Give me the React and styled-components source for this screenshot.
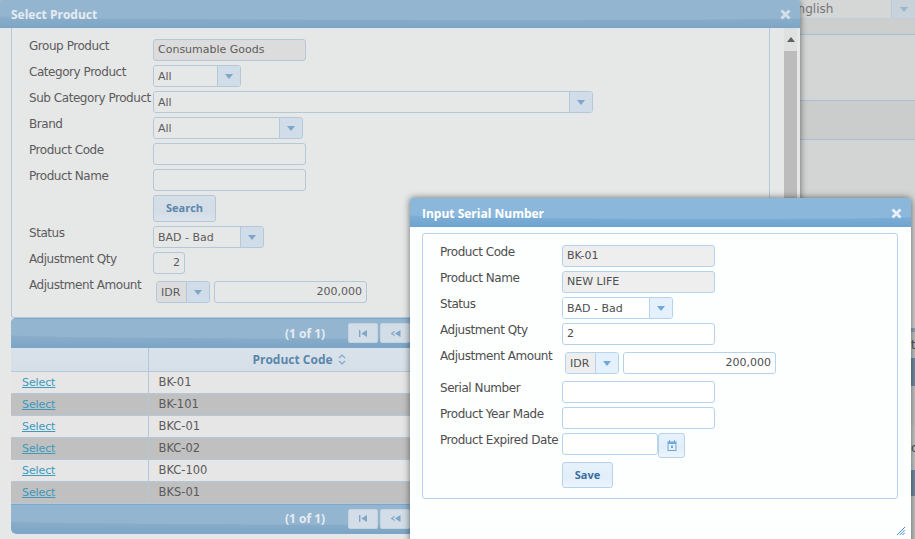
import React from "react";
import styled, { createGlobalStyle, ThemeProvider } from "styled-components";

const dimTheme = {
  body: "#e6e7e7",
  text: "#5c5c5c",
  line: "#b4c8da",
  field: "#e6e7e7",
  readonly: "#dcdcdc",
  arrowCell: "#d0dce8",
  arrow: "#7fa6c9",
  button: "linear-gradient(#d6dfe8 0%, #d3dde7 60%, #dbe3ea 100%)",
  buttonText: "#5b86ab",
  title: "#e4ecf2",
  barTop: "#94b5cf",
  barMid: "#8cafcb",
  barLow: "#7ca5c5",
};

const liveTheme = {
  ...dimTheme,
  body: "#fdfefe",
  text: "#4e4e4e",
  line: "#b5d3ec",
  field: "#ffffff",
  readonly: "#eeeeee",
  arrowCell: "#e4f0fb",
  arrow: "#6ea9d8",
  button: "linear-gradient(#e6f1fb 0%, #e1eefa 60%, #edf5fc 100%)",
  buttonText: "#3a6f9f",
  title: "#ffffff",
  barTop: "#8ab7da",
  barMid: "#7fb0d7",
  barLow: "#6ea4d0",
};

const GlobalStyle = createGlobalStyle`
  html, body {
    margin: 0;
    height: 100%;
    overflow: hidden;
    background: #d4d5d5;
    font-family: "DejaVu Sans", Verdana, sans-serif;
  }
`;

const Page = styled.div`
  position: relative;
  width: 915px;
  height: 539px;
  overflow: hidden;
`;

const Backdrop = styled.div`
  display: flex;
  flex-direction: column;
`;

const BackdropTop = styled.div`
  display: flex;
  justify-content: flex-end;
  height: 19px;
  background: #d5d6d6;
  border-bottom: 1px solid #c2ced8;
  box-sizing: border-box;
`;

const LangSelect = styled.div`
  display: flex;
  align-items: center;
  justify-content: space-between;
  width: 125px;
  height: 18px;
  font-size: 12px;
  color: #73757a;
`;

const LangArrow = styled.span`
  display: flex;
  align-items: center;
  justify-content: center;
  width: 23px;
  height: 18px;
  background: #c8d2db;
  border-left: 1px solid #bccad6;
`;

const BackdropBand = styled.div`
  height: ${(p) => p.$h}px;
  background: ${(p) => p.$bg};
  border-bottom: 1px solid ${(p) => p.$line || "transparent"};
  box-sizing: border-box;
  padding-left: 911px;
  font-size: 12px;
  line-height: ${(p) => p.$h}px;
  color: #50565c;
  overflow: hidden;
`;

const Window = styled.div`
  position: absolute;
  left: ${(p) => p.$x}px;
  top: ${(p) => p.$y}px;
  width: ${(p) => p.$w}px;
  height: ${(p) => p.$h}px;
  display: flex;
  flex-direction: column;
  background: ${(p) => p.theme.body};
  border-radius: 4px 4px 0 0;
  box-shadow: 0 0 7px rgba(0, 0, 0, 0.55);
`;

const BarSurface = styled.div`
  position: relative;
  overflow: hidden;
  background: linear-gradient(${(p) => p.theme.barMid} 55%, ${(p) => p.theme.barLow});
  &::before {
    content: "";
    position: absolute;
    left: 0;
    right: 0;
    top: 0;
    bottom: 8px;
    background: ${(p) => p.theme.barTop};
    border-radius: 0 0 35% 65% / 0 0 2px 4px;
  }
  & > * {
    position: relative;
  }
`;

const TitleBar = styled(BarSurface)`
  display: flex;
  align-items: center;
  justify-content: space-between;
  flex: none;
  height: ${(p) => p.$h}px;
  padding: 1px 9px 0 ${(p) => p.$pad}px;
  box-sizing: border-box;
  border-radius: 4px 4px 0 0;
`;

const Title = styled.span`
  font-family: "Open Sans", sans-serif;
  font-size: 12px;
  font-weight: bold;
  color: ${(p) => p.theme.title};
`;

const CloseIcon = styled.svg`
  width: 11px;
  height: 11px;
  display: block;
`;

const Body = styled.div`
  flex: 1;
  display: flex;
  min-height: 0;
  overflow: hidden;
`;

const ScrollContent = styled.div`
  width: 770px;
  padding-left: 11px;
  box-sizing: border-box;
  flex: none;
`;

const ScrollTrack = styled.div`
  margin-left: 14px;
  width: 13px;
  display: flex;
  flex-direction: column;
  flex: none;
`;

const ScrollUp = styled.div`
  height: 23px;
  background: #dfe0e0;
  display: flex;
  align-items: center;
  justify-content: center;
`;

const ScrollThumb = styled.div`
  flex: 1;
  background: #bcbcbc;
`;

const Panel = styled.div`
  box-sizing: border-box;
  border: 1px solid ${(p) => p.theme.line};
  border-radius: 0 0 3px 3px;
  padding: 11px 0 ${(p) => (p.$open ? 14 : 10)}px 17px;
  ${(p) => p.$open && "border-top: none;"}
  ${(p) => !p.$open && "border-radius: 3px; margin: 6px 13px 0 12px;"}
`;

const Row = styled.div`
  display: flex;
  align-items: flex-start;
  margin-bottom: ${(p) => (p.$amount ? 7 : 4)}px;
  ${(p) => p.$amount && "padding-top: 3px;"}
  &:last-child {
    margin-bottom: 0;
  }
`;

const Label = styled.label`
  flex: none;
  width: ${(p) => p.$w}px;
  font-size: 12px;
  letter-spacing: -0.45px;
  line-height: 14px;
  white-space: nowrap;
  color: ${(p) => p.theme.text};
  ${(p) => p.$amount && "margin-top: -3px;"}
`;

const Input = styled.input`
  box-sizing: border-box;
  display: block;
  width: ${(p) => p.$w || 153}px;
  height: 22px;
  padding: 0 4px 1px;
  margin: 0;
  border: 1px solid ${(p) => p.theme.line};
  border-radius: 3px;
  outline: none;
  font: 11px "DejaVu Sans", Verdana, sans-serif;
  color: ${(p) => p.theme.text};
  background: ${(p) => (p.$locked ? p.theme.readonly : p.theme.field)};
  text-align: ${(p) => (p.$right ? "right" : "left")};
`;

const SelectBox = styled.div`
  box-sizing: border-box;
  display: flex;
  width: ${(p) => p.$w}px;
  height: 22px;
  margin-left: ${(p) => (p.$amount ? 3 : 0)}px;
  margin-right: ${(p) => (p.$amount ? 4 : 0)}px;
  border: 1px solid ${(p) => p.theme.line};
  border-radius: 3px;
  overflow: hidden;
  font-size: 11px;
  color: ${(p) => p.theme.text};
`;

const SelectValue = styled.span`
  flex: 1;
  padding-left: 4px;
  line-height: 21px;
  background: ${(p) => (p.$locked ? p.theme.readonly : p.theme.field)};
`;

const SelectArrow = styled.span`
  flex: none;
  width: 22px;
  display: flex;
  align-items: center;
  justify-content: center;
  background: ${(p) => p.theme.arrowCell};
  border-left: 1px solid ${(p) => p.theme.line};
`;

const Caret = styled.svg`
  width: 8px;
  height: 5px;
  display: block;
`;

const ArrowPath = styled.path`
  fill: ${(p) => p.theme.arrow};
`;

const Button = styled.button`
  box-sizing: border-box;
  display: block;
  width: ${(p) => p.$w}px;
  height: ${(p) => p.$h}px;
  padding: 0 0 2px;
  border: 1px solid ${(p) => p.theme.line};
  border-radius: 3px;
  background: ${(p) => p.theme.button};
  font: bold 11px "Open Sans", sans-serif;
  color: ${(p) => p.theme.buttonText};
`;

const DateButton = styled(Button)`
  display: flex;
  align-items: center;
  justify-content: center;
  padding: 0;
`;

const TableWrap = styled.div`
  width: 759px;
  border-radius: 0 0 5px 5px;
  overflow: hidden;
`;

const Paginator = styled(BarSurface)`
  display: flex;
  align-items: center;
  justify-content: center;
  gap: 2px;
  height: ${(p) => p.$h}px;
  box-sizing: border-box;
  border-top: 1px solid #7aa7cb;
  border-bottom: 1px solid #7aa7cb;
  border-radius: ${(p) => (p.$bottom ? "0 0 5px 5px" : "5px 5px 0 0")};
`;

const PageCount = styled.span`
  font-family: "Open Sans", sans-serif;
  font-size: 12px;
  font-weight: bold;
  color: #e4ecf2;
  margin-right: 21px;
`;

const PageButton = styled.span`
  display: flex;
  align-items: center;
  justify-content: center;
  width: ${(p) => p.$w || 30}px;
  height: 20px;
  border: 1px solid #c3d3e0;
  box-sizing: border-box;
  border-radius: 2px;
  background: #d3dde7;
`;

const Table = styled.table`
  border-collapse: collapse;
  table-layout: fixed;
  width: 759px;
  font-size: 11.5px;
`;

const HeadCell = styled.th`
  height: 23px;
  padding: 0;
  background: linear-gradient(#d9e2ea, #d5dfe8);
  border-right: 1px solid #b4c8da;
  border-bottom: 1px solid #b4c8da;
  color: #5b86ab;
  font-family: "Open Sans", sans-serif;
  font-weight: bold;
  font-size: 12px;
  text-align: center;
  box-sizing: border-box;
`;

const SortIcon = styled.svg`
  width: 8px;
  height: 11px;
  margin-left: 5px;
  vertical-align: -1px;
`;

const Cell = styled.td`
  height: 22px;
  padding: 0 10px;
  box-sizing: border-box;
  background: ${(p) => (p.$alt ? "#c0c0c0" : "#e6e6e6")};
  border-right: 1px solid #b4c8da;
  border-bottom: 1px solid #b4c8da;
  color: #5a5a5a;
`;

const SelectLink = styled.a`
  color: #3c9abf;
  font-size: 11px;
  letter-spacing: -0.1px;
  margin-left: 1px;
  text-decoration: underline;
`;

const ResizeGrip = styled.svg`
  position: absolute;
  right: 6px;
  bottom: 23px;
  width: 8px;
  height: 8px;
`;

const Close = ({ color }) => (
  <CloseIcon viewBox="0 0 11 11">
    <path d="M1.5 1.5l8 8M9.5 1.5l-8 8" stroke={color} strokeWidth="2.8" />
  </CloseIcon>
);

const Dropdown = ({ w, value, locked, amount }) => (
  <SelectBox $w={w} $amount={amount}>
    <SelectValue $locked={locked}>{value}</SelectValue>
    <SelectArrow>
      <Caret viewBox="0 0 8 5">
        <ArrowPath d="M0 0h8L4 5z" />
      </Caret>
    </SelectArrow>
  </SelectBox>
);

const FirstIcon = () => (
  <svg width="10" height="7" viewBox="0 0 10 7">
    <path d="M1 0h1.4v7H1zM9 0v7L3.4 3.5z" fill="#7fa6c9" />
  </svg>
);

const PrevIcon = () => (
  <svg width="11" height="7" viewBox="0 0 11 7">
    <path d="M10.5 0v7L5 3.5zM4.8 0.8v1.2L2.6 3.5l2.2 1.5v1.2L0.6 3.5z" fill="#7fa6c9" />
  </svg>
);

const NextIcon = () => (
  <svg width="11" height="7" viewBox="0 0 11 7">
    <path d="M0.5 0v7L6 3.5zM6.2 0.8v1.2l2.2 1.5-2.2 1.5v1.2l4.2-2.7z" fill="#7fa6c9" />
  </svg>
);

const LastIcon = () => (
  <svg width="10" height="7" viewBox="0 0 10 7">
    <path d="M9 0H7.6v7H9zM1 0v7l5.6-3.5z" fill="#7fa6c9" />
  </svg>
);

const Pager = ({ h, bottom }) => (
  <Paginator $h={h} $bottom={bottom}>
    <PageCount>(1 of 1)</PageCount>
    <PageButton><FirstIcon /></PageButton>
    <PageButton><PrevIcon /></PageButton>
    <PageButton $w={20} />
    <PageButton><NextIcon /></PageButton>
    <PageButton><LastIcon /></PageButton>
  </Paginator>
);

const products = ["BK-01", "BK-101", "BKC-01", "BKC-02", "BKC-100", "BKS-01"];

const backdropBands = [
  { h: 16, bg: "#cdcece", line: "#a9c0d4" },
  { h: 66, bg: "#d4d5d5", line: "#a9c0d4" },
  { h: 39, bg: "#cbcccc", line: "#a9c0d4" },
  { h: 188, bg: "#d3d4d4" },
  { h: 4, bg: "#8fa6ba" },
  { h: 26, bg: "#c4c5c5", text: "t" },
  { h: 28, bg: "#6f8ea9" },
  { h: 40, bg: "#c6c7c7" },
  { h: 44, bg: "#c9caca", text: "c" },
  { h: 26, bg: "#6f8ea9" },
  { h: 44, bg: "#c4c5c5" },
];

export default function App() {
  return (
    <>
      <GlobalStyle />
      <Page>
        <Backdrop>
          <BackdropTop>
            <LangSelect>
              <span>English</span>
              <LangArrow>
                <Caret viewBox="0 0 8 5">
                  <path d="M0 0h8L4 5z" fill="#9db6cb" />
                </Caret>
              </LangArrow>
            </LangSelect>
          </BackdropTop>
          {backdropBands.map((b, i) => (
            <BackdropBand key={i} $h={b.h} $bg={b.bg} $line={b.line}>
              {b.text}
            </BackdropBand>
          ))}
        </Backdrop>

        <ThemeProvider theme={dimTheme}>
          <Window $x={0} $y={0} $w={800} $h={560}>
            <TitleBar $h={28} $pad={11}>
              <Title>Select Product</Title>
              <Close color="#d5dfe7" />
            </TitleBar>
            <Body>
              <ScrollContent>
                <Panel $open>
                  <Row>
                    <Label $w={124}>Group Product</Label>
                    <Input $locked readOnly value="Consumable Goods" />
                  </Row>
                  <Row>
                    <Label $w={124}>Category Product</Label>
                    <Dropdown w={88} value="All" />
                  </Row>
                  <Row>
                    <Label $w={124}>Sub Category Product</Label>
                    <Dropdown w={440} value="All" />
                  </Row>
                  <Row>
                    <Label $w={124}>Brand</Label>
                    <Dropdown w={150} value="All" />
                  </Row>
                  <Row>
                    <Label $w={124}>Product Code</Label>
                    <Input readOnly />
                  </Row>
                  <Row>
                    <Label $w={124}>Product Name</Label>
                    <Input readOnly />
                  </Row>
                  <Row>
                    <Label $w={124} />
                    <Button $w={63} $h={27}>Search</Button>
                  </Row>
                  <Row>
                    <Label $w={124}>Status</Label>
                    <Dropdown w={111} value="BAD - Bad" />
                  </Row>
                  <Row>
                    <Label $w={124}>Adjustment Qty</Label>
                    <Input $w={32} $right readOnly value="2" />
                  </Row>
                  <Row $amount>
                    <Label $w={124} $amount>Adjustment Amount</Label>
                    <Dropdown w={54} value="IDR" locked amount />
                    <Input $right readOnly value="200,000" />
                  </Row>
                </Panel>
                <TableWrap>
                  <Pager h={30} />
                  <Table>
                    <colgroup>
                      <col width="137" />
                      <col width="302" />
                      <col />
                    </colgroup>
                    <thead>
                      <tr>
                        <HeadCell />
                        <HeadCell>
                          Product Code
                          <SortIcon viewBox="0 0 8 11">
                            <path d="M1 4l3-3 3 3M1 7l3 3 3-3" fill="none" stroke="#7fa6c9" strokeWidth="1.2" />
                          </SortIcon>
                        </HeadCell>
                        <HeadCell />
                      </tr>
                    </thead>
                    <tbody>
                      {products.map((code, i) => (
                        <tr key={code}>
                          <Cell $alt={i % 2 === 1}>
                            <SelectLink href="#">Select</SelectLink>
                          </Cell>
                          <Cell $alt={i % 2 === 1}>{code}</Cell>
                          <Cell $alt={i % 2 === 1} />
                        </tr>
                      ))}
                    </tbody>
                  </Table>
                  <Pager h={30} bottom />
                </TableWrap>
              </ScrollContent>
              <ScrollTrack>
                <ScrollUp>
                  <Caret viewBox="0 0 8 5">
                    <path d="M0 5h8L4 0z" fill="#5f6264" />
                  </Caret>
                </ScrollUp>
                <ScrollThumb />
              </ScrollTrack>
            </Body>
          </Window>
        </ThemeProvider>

        <ThemeProvider theme={liveTheme}>
          <Window $x={410} $y={198} $w={501} $h={360}>
            <TitleBar $h={29} $pad={12}>
              <Title>Input Serial Number</Title>
              <Close color="#e8f1f8" />
            </TitleBar>
            <Panel>
              <Row>
                <Label $w={122}>Product Code</Label>
                <Input $locked readOnly value="BK-01" />
              </Row>
              <Row>
                <Label $w={122}>Product Name</Label>
                <Input $locked readOnly value="NEW LIFE" />
              </Row>
              <Row>
                <Label $w={122}>Status</Label>
                <Dropdown w={111} value="BAD - Bad" />
              </Row>
              <Row>
                <Label $w={122}>Adjustment Qty</Label>
                <Input readOnly value="2" />
              </Row>
              <Row $amount>
                <Label $w={122} $amount>Adjustment Amount</Label>
                <Dropdown w={54} value="IDR" locked amount />
                <Input $right readOnly value="200,000" />
              </Row>
              <Row>
                <Label $w={122}>Serial Number</Label>
                <Input readOnly />
              </Row>
              <Row>
                <Label $w={122}>Product Year Made</Label>
                <Input readOnly />
              </Row>
              <Row>
                <Label $w={122}>Product Expired Date</Label>
                <Input $w={96} readOnly />
                <DateButton $w={27} $h={25}>
                  <svg width="10" height="11" viewBox="0 0 10 11">
                    <path
                      d="M2 0h1v1.5h4V0h1v1.5h1.5V11H.5V1.5H2zM1.5 4v6h7V4zM4 5.5h2V8H4z"
                      fill="#6ea9d8"
                      fillRule="evenodd"
                    />
                  </svg>
                </DateButton>
              </Row>
              <Row>
                <Label $w={122} />
                <Button $w={51} $h={26}>Save</Button>
              </Row>
            </Panel>
            <ResizeGrip viewBox="0 0 8 8">
              <path d="M8 0L0 8M8 2.7L2.7 8M8 5.4L5.4 8" stroke="#4f8fcb" strokeWidth="1" fill="none" />
            </ResizeGrip>
          </Window>
        </ThemeProvider>
      </Page>
    </>
  );
}
